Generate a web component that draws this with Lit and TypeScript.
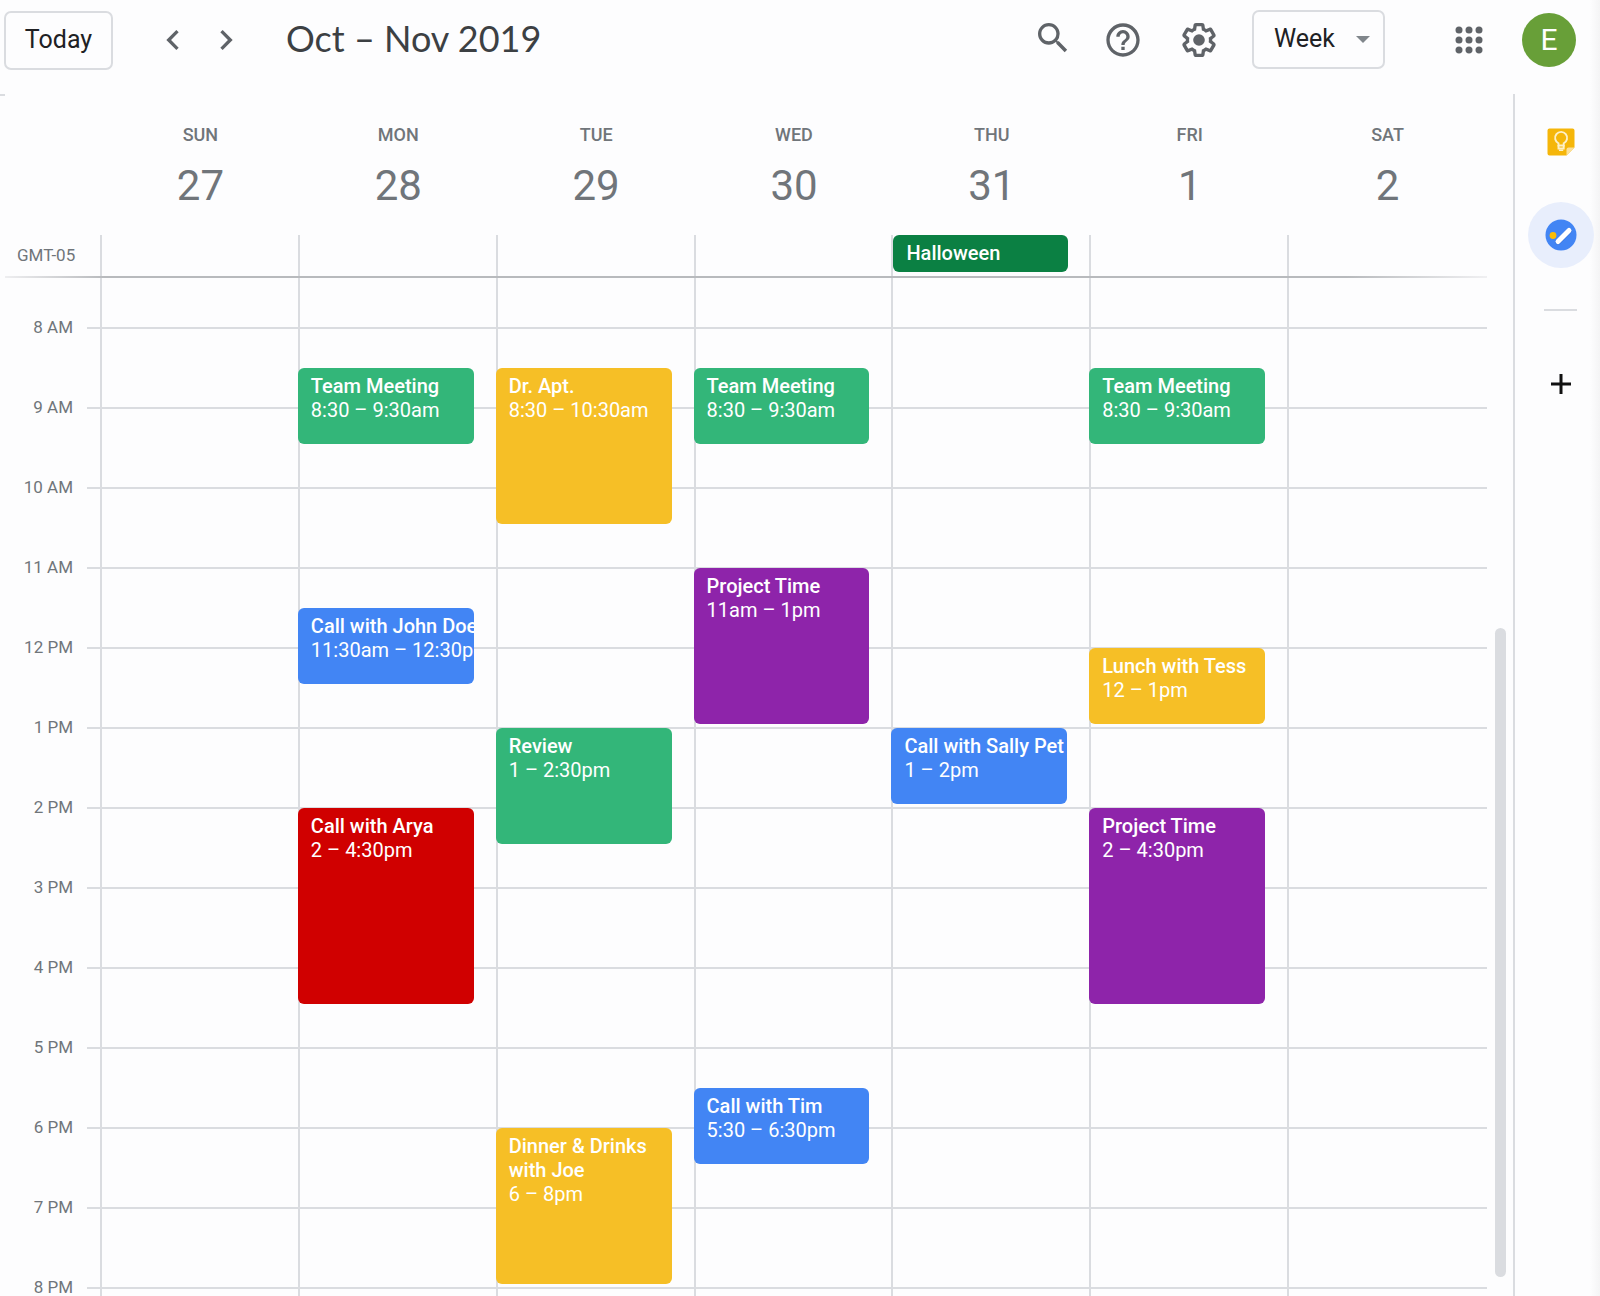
import { LitElement, html, css, svg } from "lit";
import { customElement, property } from "lit/decorators.js";
import { classMap } from "lit/directives/class-map.js";
import { styleMap } from "lit/directives/style-map.js";

interface CalEvent {
  title: string;
  time: string;
  start: number;
  end: number;
  color: string;
}

interface Day {
  name: string;
  date: number;
  allDay?: string;
  events: CalEvent[];
}

const FIRST_HOUR = 8;

const team = (): CalEvent => ({
  title: "Team Meeting",
  time: "8:30 – 9:30am",
  start: 8.5,
  end: 9.5,
  color: "green",
});

const DAYS: Day[] = [
  { name: "Sun", date: 27, events: [] },
  {
    name: "Mon",
    date: 28,
    events: [
      team(),
      { title: "Call with John Doe", time: "11:30am – 12:30pm", start: 11.5, end: 12.5, color: "blue" },
      { title: "Call with Arya", time: "2 – 4:30pm", start: 14, end: 16.5, color: "red" },
    ],
  },
  {
    name: "Tue",
    date: 29,
    events: [
      { title: "Dr. Apt.", time: "8:30 – 10:30am", start: 8.5, end: 10.5, color: "yellow" },
      { title: "Review", time: "1 – 2:30pm", start: 13, end: 14.5, color: "green" },
      { title: "Dinner & Drinks with Joe", time: "6 – 8pm", start: 18, end: 20, color: "yellow" },
    ],
  },
  {
    name: "Wed",
    date: 30,
    events: [
      team(),
      { title: "Project Time", time: "11am – 1pm", start: 11, end: 13, color: "purple" },
      { title: "Call with Tim", time: "5:30 – 6:30pm", start: 17.5, end: 18.5, color: "blue" },
    ],
  },
  {
    name: "Thu",
    date: 31,
    allDay: "Halloween",
    events: [{ title: "Call with Sally Pet", time: "1 – 2pm", start: 13, end: 14, color: "blue" }],
  },
  {
    name: "Fri",
    date: 1,
    events: [
      team(),
      { title: "Lunch with Tess", time: "12 – 1pm", start: 12, end: 13, color: "yellow" },
      { title: "Project Time", time: "2 – 4:30pm", start: 14, end: 16.5, color: "purple" },
    ],
  },
  { name: "Sat", date: 2, events: [] },
];

const HOURS = Array.from({ length: 13 }, (_, i) => {
  const h = FIRST_HOUR + i;
  return `${h > 12 ? h - 12 : h} ${h < 12 ? "AM" : "PM"}`;
});

const icon = (body: unknown) =>
  html`<svg class="icon" viewBox="0 0 24 24" aria-hidden="true">${body}</svg>`;

const PREV = svg`<path d="M15.41 7.41 14 6l-6 6 6 6 1.41-1.41L10.83 12z"/>`;
const NEXT = svg`<path d="M10 6 8.59 7.41 13.17 12l-4.58 4.59L10 18l6-6z"/>`;
const SEARCH = svg`<path d="M15.5 14h-.79l-.28-.27A6.47 6.47 0 0 0 16 9.5 6.5 6.5 0 1 0 9.5 16c1.61 0 3.09-.59 4.23-1.57l.27.28v.79l5 4.99L20.49 19l-4.99-5zm-6 0C7.01 14 5 11.99 5 9.5S7.01 5 9.5 5 14 7.01 14 9.5 11.99 14 9.5 14z"/>`;
const HELP = svg`<path d="M11 18h2v-2h-2v2zm1-16C6.48 2 2 6.48 2 12s4.48 10 10 10 10-4.48 10-10S17.52 2 12 2zm0 18c-4.41 0-8-3.59-8-8s3.59-8 8-8 8 3.59 8 8-3.59 8-8 8zm0-14c-2.21 0-4 1.79-4 4h2c0-1.1.9-2 2-2s2 .9 2 2c0 2-3 1.75-3 5h2c0-2.25 3-2.5 3-5 0-2.21-1.79-4-4-4z"/>`;
const GEAR = svg`<path d="M13.85 22.25h-3.7c-.74 0-1.36-.54-1.45-1.27l-.27-1.89c-.27-.14-.53-.29-.79-.46l-1.8.72c-.7.26-1.47-.03-1.81-.65L2.2 15.53c-.35-.66-.2-1.44.36-1.88l1.53-1.19c-.01-.15-.02-.3-.02-.46 0-.15.01-.31.02-.46l-1.52-1.19c-.59-.45-.74-1.26-.37-1.88l1.85-3.19c.34-.62 1.11-.9 1.79-.63l1.81.73c.26-.17.52-.32.78-.46l.27-1.91c.09-.7.71-1.25 1.44-1.25h3.7c.74 0 1.36.54 1.45 1.27l.27 1.89c.27.14.53.29.79.46l1.8-.72c.71-.26 1.48.03 1.82.65l1.84 3.18c.36.66.2 1.44-.36 1.88l-1.52 1.19c.01.15.02.3.02.46s-.01.31-.02.46l1.52 1.19c.56.45.72 1.23.37 1.86l-1.86 3.22c-.34.62-1.11.9-1.8.63l-1.8-.72c-.26.17-.52.32-.78.46l-.27 1.91c-.1.68-.72 1.22-1.46 1.22zm-3.23-2h2.76l.37-2.55.53-.22c.44-.18.88-.44 1.34-.78l.45-.34 2.38.96 1.38-2.4-2.03-1.58.07-.56c.03-.26.06-.51.06-.78s-.03-.53-.06-.78l-.07-.56 2.03-1.58-1.39-2.4-2.39.96-.45-.35c-.42-.32-.87-.58-1.33-.77l-.52-.22-.37-2.55h-2.76l-.37 2.55-.53.21c-.44.19-.88.44-1.34.79l-.45.33-2.38-.95-1.39 2.39 2.03 1.58-.07.56a7 7 0 0 0-.06.79c0 .26.02.53.06.78l.07.56-2.03 1.58 1.38 2.4 2.39-.96.45.35c.43.33.86.58 1.33.77l.53.22.38 2.55z"/><circle cx="12" cy="12" r="3.5"/>`;
const APPS = svg`${[6, 12, 18].map((y) => [6, 12, 18].map((x) => svg`<circle cx=${x} cy=${y} r="2.1"/>`))}`;

@customElement("day-column")
class DayColumn extends LitElement {
  @property({ attribute: false }) events: CalEvent[] = [];

  static styles = css`
    :host {
      display: grid;
      grid-template-rows: 50px;
      grid-auto-rows: 40px;
      grid-template-columns: minmax(0, 1fr);
      border-left: 2px solid #dadce0;
    }
    .event {
      display: flex;
      flex-direction: column;
      align-items: flex-start;
      justify-content: flex-start;
      margin: 0 22px 4px -2px;
      padding: 6px 0 0 13px;
      border: 0;
      border-radius: 6px;
      overflow: hidden;
      color: #fff;
      font: 400 20px/24px Roboto, "Liberation Sans", sans-serif;
      text-align: left;
      cursor: pointer;
    }
    .title {
      font-weight: 500;
    }
    .short {
      white-space: nowrap;
    }
    .green { background: #33b679; }
    .blue { background: #4285f4; }
    .red { background: #d00000; }
    .yellow { background: #f6bf26; }
    .purple { background: #8e24aa; }
  `;

  render() {
    return this.events.map((e) => {
      const row = (e.start - FIRST_HOUR) * 2 + 2;
      const span = (e.end - e.start) * 2;
      return html`<button
        class=${classMap({ event: true, short: span <= 2, [e.color]: true })}
        style=${styleMap({ gridRow: `${row} / span ${span}`, gridColumn: "1" })}
      >
        <span class="title">${e.title}</span>
        <span>${e.time}</span>
      </button>`;
    });
  }
}

@customElement("side-panel")
class SidePanel extends LitElement {
  static styles = css`
    :host {
      display: flex;
      flex-direction: column;
      align-items: center;
      box-sizing: border-box;
      padding-top: 15px;
      border-left: 2px solid #dadce0;
    }
    .app {
      display: grid;
      place-items: center;
      width: 66px;
      height: 66px;
      margin: 0 0 27px 7px;
      padding: 0;
      border: 0;
      border-radius: 50%;
      background: none;
      cursor: pointer;
    }
    .selected {
      background: #e8eefc;
    }
    .rule {
      width: 33px;
      height: 2px;
      margin: 14px 0 40px 6px;
      border: 0;
      background: #dadce0;
    }
    svg {
      display: block;
      width: 32px;
      height: 32px;
    }
  `;

  render() {
    return html`
      <button class="app" aria-label="Keep">
        <svg viewBox="0 0 32 32">
          <path fill="#f5b60a" d="M4.500 2.500h23a2 2 0 0 1 2 2v17l-8 8h-17a2 2 0 0 1-2-2v-23a2 2 0 0 1 2-2z" />
          <path fill="#fbe09a" d="M29.500 21.500h-6a2 2 0 0 0-2 2v6z" />
          <g fill="none" stroke="#fdf0c8" stroke-width="1.900">
            <path d="M13.500 19.500v-2.200a6 6 0 1 1 5.200 0v2.200z" />
            <path d="M13.500 19v3.500h5.200V19" />
          </g>
          <path fill="#fdf0c8" d="M14 23.500h4.200v1.500H14z" />
        </svg>
      </button>
      <button class="app selected" aria-label="Tasks">
        <svg viewBox="0 0 32 32">
          <circle cx="16" cy="16" r="15.500" fill="#4285f4" />
          <path d="M13 23 24 12" fill="none" stroke="#2f63c0" stroke-opacity=".5" stroke-width="5.400" stroke-linecap="round" />
          <circle cx="8" cy="16.500" r="3.400" fill="#fbbc04" />
          <path d="M13 22.500 24 11.500" fill="none" stroke="#fff" stroke-width="5" stroke-linecap="round" />
        </svg>
      </button>
      <hr class="rule" />
      <button class="app" aria-label="Get add-ons">
        <svg viewBox="0 0 32 32">
          <path d="M16 6v20M6 16h20" stroke="#111" stroke-width="3" />
        </svg>
      </button>
    `;
  }
}

@customElement("app-root")
class AppRoot extends LitElement {
  static styles = css`
    :host {
      display: flex;
      flex-direction: column;
      height: 100vh;
      overflow: hidden;
      color: #70757a;
      background: linear-gradient(to left, #f4f4f5, #fdfdfe 10px);
      font-family: Roboto, "Liberation Sans", sans-serif;
    }
    button {
      padding: 0;
      border: 0;
      background: none;
      cursor: pointer;
    }
    .topbar {
      display: flex;
      align-items: center;
      flex: none;
      height: 80px;
      padding: 0 24px 0 4px;
    }
    .today,
    .view select {
      box-sizing: border-box;
      height: 59px;
      border: 2px solid #dadce0;
      border-radius: 7px;
      background: transparent;
      color: #202124;
      font: 400 25px/28px Roboto, "Liberation Sans", sans-serif;
    }
    .today {
      min-width: 109px;
      padding: 0;
      margin-right: 40px;
    }
    .icon {
      display: block;
      width: 40px;
      height: 40px;
      fill: #5f6368;
    }
    .next {
      margin-left: 13px;
    }
    .range {
      flex: 1;
      margin: 0 0 0 40px;
      padding-bottom: 4px;
      color: #3c4043;
      font: 400 36px/48px Lato, Roboto, sans-serif;
    }
    .tools {
      display: flex;
      align-items: center;
    }
    .search {
      margin-right: 30px;
      padding-bottom: 4px;
    }
    .help {
      margin-right: 36px;
    }
    .gear {
      margin-right: 33px;
    }
    .view {
      display: grid;
      align-items: center;
      margin-right: 64px;
      padding-bottom: 2px;
    }
    .view select {
      grid-area: 1 / 1;
      width: 133px;
      padding: 0 20px;
      appearance: none;
    }
    .arrow {
      grid-area: 1 / 1;
      justify-self: end;
      width: 14px;
      height: 7px;
      margin-right: 15px;
      fill: #80868b;
      pointer-events: none;
    }
    .avatar {
      width: 54px;
      height: 54px;
      margin-left: 33px;
      border-radius: 50%;
      background: #689f38;
      color: #fff;
      font: 400 30px/54px Roboto, sans-serif;
    }
    .main {
      display: flex;
      flex: 1;
      min-height: 0;
      padding-top: 14px;
    }
    .calendar {
      display: flex;
      flex: 1;
      flex-direction: column;
      min-width: 0;
    }
    side-panel {
      flex: none;
      width: 87px;
    }
    .stub {
      flex: none;
      width: 5px;
      height: 2px;
      background: #dadce0;
    }
    .row {
      display: grid;
      grid-template-columns: 100px repeat(7, minmax(0, 1fr)) 28px;
    }
    .heads {
      height: 139px;
      box-sizing: border-box;
      padding-top: 29px;
      text-align: center;
    }
    .head {
      padding-left: 3px;
    }
    .day-name {
      font: 500 18px/20px Roboto, sans-serif;
      text-transform: uppercase;
    }
    .day-date {
      margin-top: 16px;
      font: 400 42px/50px Roboto, sans-serif;
    }
    .all-day {
      flex: none;
      height: 41px;
    }
    .zone {
      padding-left: 17px;
      font-size: 17px;
      line-height: 40px;
    }
    .slot {
      border-left: 2px solid #dadce0;
    }
    .holiday {
      display: block;
      width: calc(100% - 21px);
      height: 37px;
      padding: 0 0 2px 13px;
      border-radius: 6px;
      background: #0b8043;
      color: #fff;
      font: 500 20px/24px Roboto, sans-serif;
      text-align: left;
    }
    .edge {
      flex: none;
      height: 2px;
      margin: 0 26px 0 5px;
      background: linear-gradient(to right, #eeeef0, #b8babd 100px, #b8babd calc(100% - 140px), #f0f0f2);
    }
    .body {
      flex: 1;
      min-height: 0;
      overflow: hidden;
      grid-template-rows: minmax(0, 1fr);
      background: linear-gradient(#dadce0 2px, transparent 2px) 87px 49px / calc(100% - 113px) 80px repeat-y;
    }
    .hours {
      padding-top: 9px;
    }
    .hour {
      display: flex;
      align-items: center;
      justify-content: flex-end;
      height: 80px;
      padding-right: 27px;
      font-size: 17px;
    }
    .track {
      display: flex;
      flex-direction: column;
      justify-content: flex-end;
      padding: 0 7px 19px 10px;
    }
    .thumb {
      height: 65%;
      border-radius: 6px;
      background: #dadce0;
    }
  `;

  render() {
    return html`
      <header class="topbar">
        <button class="today">Today</button>
        <button aria-label="Previous week">${icon(PREV)}</button>
        <button class="next" aria-label="Next week">${icon(NEXT)}</button>
        <h1 class="range">Oct – Nov 2019</h1>
        <div class="tools">
          <button class="search" aria-label="Search">${icon(SEARCH)}</button>
          <button class="help" aria-label="Help">${icon(HELP)}</button>
          <button class="gear" aria-label="Settings">${icon(GEAR)}</button>
          <div class="view">
            <select aria-label="View">
              <option>Week</option>
            </select>
            <svg class="arrow" viewBox="0 0 14 7" aria-hidden="true"><path d="M0 0h14L7 7z" /></svg>
          </div>
          <button aria-label="Apps">${icon(APPS)}</button>
          <button class="avatar" aria-label="Account">E</button>
        </div>
      </header>
      <div class="main">
        <main class="calendar">
          <div class="stub"></div>
          <div class="row heads">
            <span></span>
            ${DAYS.map(
              (d) => html`<div class="head">
                <div class="day-name">${d.name}</div>
                <div class="day-date">${d.date}</div>
              </div>`
            )}
          </div>
          <div class="row all-day">
            <div class="zone">GMT-05</div>
            ${DAYS.map(
              (d) => html`<div class="slot">
                ${d.allDay ? html`<button class="holiday">${d.allDay}</button>` : null}
              </div>`
            )}
          </div>
          <div class="edge"></div>
          <div class="row body">
            <div class="hours">${HOURS.map((h) => html`<div class="hour">${h}</div>`)}</div>
            ${DAYS.map((d) => html`<day-column .events=${d.events}></day-column>`)}
            <div class="track"><div class="thumb"></div></div>
          </div>
        </main>
        <side-panel></side-panel>
      </div>
    `;
  }
}
